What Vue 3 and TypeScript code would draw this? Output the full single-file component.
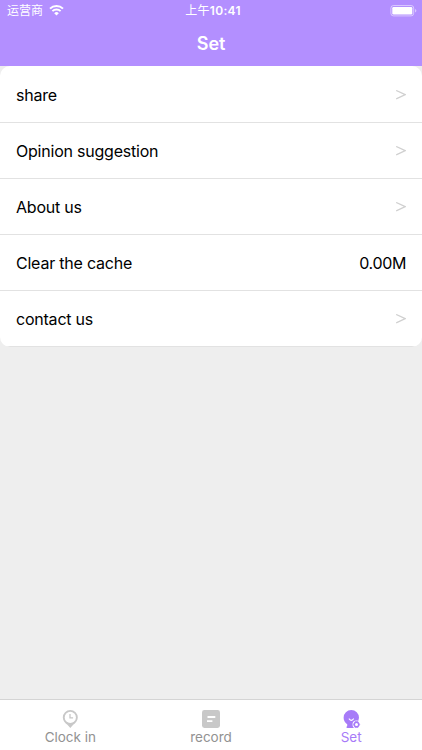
<script setup lang="ts">
interface Row {
  label: string
  value?: string
}

const rows: Row[] = [
  { label: 'share' },
  { label: 'Opinion suggestion' },
  { label: 'About us' },
  { label: 'Clear the cache', value: '0.00M' },
  { label: 'contact us' },
]
</script>

<template>
  <div class="screen">
    <header class="header">
      <div class="status">
        <div class="carrier">
          <span>运营商</span>
          <svg class="wifi" width="15" height="12" viewBox="0 0 15 12">
            <path d="M1 4.6a9.2 9.2 0 0 1 13 0" fill="none" stroke="#fff" stroke-width="2" />
            <path d="M3.4 7.2a5.8 5.8 0 0 1 8.2 0" fill="none" stroke="#fff" stroke-width="1.9" />
            <path d="M5.2 9.2a3.2 3.2 0 0 1 4.6 0L7.5 11.5z" fill="#fff" />
          </svg>
        </div>
        <div class="time">上午<b>10:41</b></div>
        <div class="power">
          <svg width="27" height="12" viewBox="0 0 27 12">
            <rect x=".9" y=".5" width="22.8" height="10.4" rx="2.6" fill="none" stroke="#fff" stroke-opacity=".5" />
            <rect x="2.3" y="2" width="20" height="7.4" rx="1.2" fill="#fff" />
            <path d="M25 4v3.6q1.4-.5 1.4-1.8T25 4z" fill="#fff" fill-opacity=".5" />
          </svg>
        </div>
      </div>
      <h1 class="title">Set</h1>
    </header>

    <main class="content">
      <ul class="list">
        <li v-for="row in rows" :key="row.label" class="row">
          <span>{{ row.label }}</span>
          <span v-if="row.value" class="value">{{ row.value }}</span>
          <svg v-else class="chevron" width="11" height="10" viewBox="0 0 11 10">
            <path d="M1.2 .5 10.3 4.7 1.2 8.9" fill="none" stroke="#d0d0d0" stroke-width="1.3" />
          </svg>
        </li>
      </ul>
    </main>

    <nav class="tabs">
      <div class="tab">
        <svg width="20" height="20" viewBox="-.3 0 20 20">
          <path d="M10 1a7.5 7.5 0 0 0-7.5 7.5c0 3.400 2.400 5.700 4.600 7.300L10 19l2.900-3.200c2.200-1.600 4.600-3.900 4.600-7.300A7.500 7.500 0 0 0 10 1z" fill="#c8c8c8" />
          <circle cx="10" cy="8.4" r="5.6" fill="#fff" />
          <path d="M9.700 4.900v3.900h3.100" fill="none" stroke="#c8c8c8" stroke-width="1.3" />
        </svg>
        <span>Clock in</span>
      </div>
      <div class="tab">
        <svg width="20" height="20" viewBox="0 0 20 20">
          <rect x="1" y="1" width="18" height="18" rx="2.4" fill="#c8c8c8" />
          <path d="M6.500 8h7.800M6 12.200h5.400" stroke="#fff" stroke-width="1.8" />
        </svg>
        <span>record</span>
      </div>
      <div class="tab active">
        <svg width="20" height="20" viewBox=".7 0 20 20">
          <path d="M10 1a7.700 7.700 0 0 0-7.700 7.700c0 2.900 1.500 5 3.600 6.500v1.500q0 .7-.6.900v1.400h10V14a7.700 7.700 0 0 0 2.400-5.300A7.700 7.700 0 0 0 10 1z" fill="#a77bf8" />
          <path d="M7.900 10q2.100 2.700 4.200 0" fill="none" stroke="#fff" stroke-width="1.2" stroke-linecap="round" />
          <circle cx="15.2" cy="15.5" r="4" fill="#fff" />
          <path d="m13.700 12.600h3l1.700 2.900-1.700 2.900h-3l-1.700-2.900z" fill="#a77bf8" stroke="#a77bf8" stroke-width=".6" stroke-linejoin="round" />
          <circle cx="15.2" cy="15.5" r="1.5" fill="#fff" />
        </svg>
        <span>Set</span>
      </div>
    </nav>
  </div>
</template>

<style>
body {
  margin: 0;
}
</style>

<style scoped>
.screen {
  display: flex;
  flex-direction: column;
  height: 100vh;
  background: #eee;
  color: #000;
  font-family: Inter, "Noto Sans CJK SC", sans-serif;
}
.header {
  flex: none;
  height: 66px;
  background: #b38fff;
  color: #fff;
}
.status {
  display: grid;
  grid-template-columns: 1fr auto 1fr;
  align-items: center;
  height: 22px;
  padding: 0 5px 0 7px;
  font-size: 12px;
  line-height: 22px;
}
.carrier {
  display: flex;
  align-items: center;
  gap: 6px;
}
.wifi {
  margin-bottom: 2px;
}
.time {
  padding-left: 2px;
  letter-spacing: 0.3px;
}
.time b {
  font-weight: 600;
}
.power {
  display: flex;
  justify-content: flex-end;
}
.title {
  margin: 0;
  font-size: 18px;
  font-weight: 600;
  line-height: 43px;
  text-align: center;
  letter-spacing: -0.1px;
}
.content {
  flex: 1;
}
.list {
  margin: 0;
  padding: 1px 0 0;
  list-style: none;
  background: #fff;
  border-radius: 10px;
  overflow: hidden;
}
.row {
  box-sizing: border-box;
  display: flex;
  align-items: center;
  justify-content: space-between;
  height: 56px;
  padding: 0 16px;
  border-bottom: 1px solid #e2e2e2;
  font-size: 16px;
  letter-spacing: -0.22px;
}
.value {
  letter-spacing: -0.35px;
}
.tabs {
  box-sizing: border-box;
  flex: none;
  display: flex;
  height: 51px;
  padding-top: 9px;
  border-top: 1px solid #d4d4d4;
  background: #fff;
}
.tab {
  flex: 1;
  display: flex;
  flex-direction: column;
  align-items: center;
  color: #929292;
  font-size: 13.5px;
  line-height: 17px;
}
.tab.active {
  color: #a77bf8;
}
.tab.active span {
  margin-right: 1px;
}
</style>
